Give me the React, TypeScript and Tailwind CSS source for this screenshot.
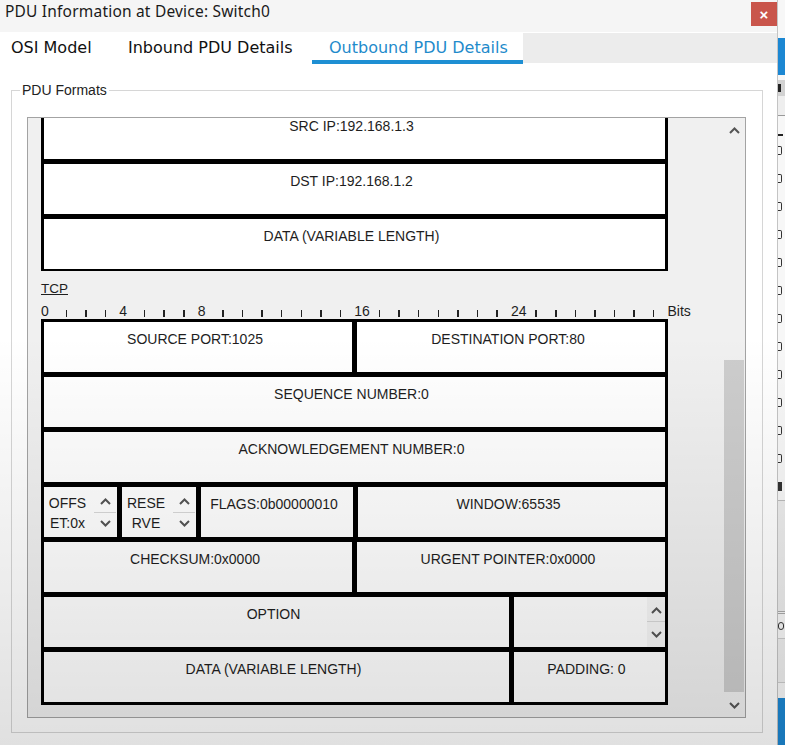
import { clsx } from 'clsx'

const sans = "font-['Liberation_Sans',Arial,sans-serif]"

const bitLabels: Record<number, string> = { 0: '0', 4: '4', 8: '8', 16: '16', 24: '24' }

function Chevron({ up }: { up?: boolean }) {
  return (
    <svg width="11" height="7" viewBox="0 0 11 7">
      <polyline
        points={up ? '1,6 5.5,1.5 10,6' : '1,1 5.5,5.5 10,1'}
        fill="none"
        stroke="#555"
        strokeWidth="2"
      />
    </svg>
  )
}

function Spinner({ className }: { className?: string }) {
  return (
    <div className={clsx('flex flex-col w-[22px] shrink-0', className)}>
      <div className="h-[25px] flex items-center justify-center pt-[4px]">
        <Chevron up />
      </div>
      <div className="h-px bg-[#d8d8d8]" />
      <div className="h-[24px] flex items-center justify-center pb-[4px]">
        <Chevron />
      </div>
    </div>
  )
}

function Cell({ className, children }: { className?: string; children?: React.ReactNode }) {
  return (
    <div
      className={clsx(
        'h-[50px] bg-white text-center pt-[9px] pr-[6px] leading-[16px] text-[14px] text-[#1e1e1e] whitespace-nowrap overflow-hidden',
        className
      )}
    >
      {children}
    </div>
  )
}

function SpinCell({ lines, className }: { lines: string[]; className?: string }) {
  return (
    <div className={clsx('h-[50px] bg-white flex', className)}>
      <div className="flex-1 text-center pt-[6px] pr-[3px] leading-[20px] text-[14px] text-[#1e1e1e]">
        {lines.map((l) => (
          <div key={l}>{l}</div>
        ))}
      </div>
      <Spinner className="mr-px" />
    </div>
  )
}

// sliver of the window behind the dialog
function BackWindow() {
  const marks = [164, 190, 217, 245, 273, 302, 330, 357, 385, 414, 442, 470]
  return (
    <div className="w-[8px] h-full shrink-0 overflow-hidden flex flex-col bg-[#f7f7f7] border-l border-[#c4c4c4]">
      <div className="h-[38px] shrink-0" />
      <div className="h-[37px] shrink-0 bg-[#1c87d2]" />
      <div className="h-[5px] shrink-0" />
      <div className="h-[16px] shrink-0 bg-[#d2d2d2] pt-[4px]">
        <div className="w-[3px] h-[8px] bg-[#222]" />
      </div>
      <div className="h-[20px] shrink-0 bg-[#eeeeee] border-b border-[#999]" />
      <div className="h-[18px] shrink-0" />
      <div className="h-[10px] shrink-0 flex">
        <div className="w-[5px] h-[2px] bg-[#222]" />
      </div>
      {marks.map((y) => (
        <div key={y} className="h-[28px] shrink-0 pt-[2px]">
          <div className="w-[4px] h-[9px] border-r-[1.5px] border-y-[1.5px] border-[#333] rounded-r-[2px]" />
        </div>
      ))}
      <div className="h-[18px] shrink-0 pt-[2px]">
        <div className="w-[4px] h-[9px] bg-[#333]" />
      </div>
      <div className="h-px shrink-0 bg-[#bbb] mt-[2px]" />
      <div className="h-[110px] shrink-0 bg-[#ececec]" />
      <div className="h-[3px] shrink-0 border-y border-[#aaa]" />
      <div className="h-[24px] shrink-0 pt-[8px]">
        <div className="w-[6px] h-[8px] border-[1.5px] border-[#333] rounded-full" />
      </div>
      <div className="h-[45px] shrink-0 border-y border-[#ccc] bg-[#eeeeee]" />
      <div className="h-[15px] shrink-0" />
      <div className="flex-1 bg-[#1c87d2]" />
    </div>
  )
}

export default function App() {
  return (
    <div className={clsx('w-[785px] h-[745px] relative overflow-hidden flex bg-white', sans)}>
      <div className="w-[777px] h-full shrink-0 flex flex-col bg-white">
        {/* title bar */}
        <div className="h-[32px] shrink-0 flex items-start justify-between bg-[#f5f5f5]">
          <span className="pl-[5px] pt-[1px] text-[15.5px] tracking-[0.2px] leading-[21px] text-[#1a1a1a] font-['Noto_Sans',sans-serif]">
            PDU Information at Device: Switch0
          </span>
          <button className="mt-[2px] w-[26px] h-[24px] bg-[#c9554b] text-white flex items-center justify-center text-[15px] font-bold leading-none">
            ×
          </button>
        </div>

        {/* tabs */}
        <div className="h-[32px] shrink-0 flex font-['DejaVu_Sans',sans-serif] text-[16px] leading-[18px] whitespace-nowrap">
          <div className="w-[112px] h-full pl-[11px] pt-[7px] text-[#111]">OSI Model</div>
          <div className="w-[200px] h-full pl-[16px] pt-[7px] text-[#111]">Inbound PDU Details</div>
          <div className="w-[211px] h-full pl-[17px] pt-[7px] text-[#1f8bcb] border-b-[4px] border-[#1e8fd3]">
            Outbound PDU Details
          </div>
          <div className="flex-1 mt-px h-[30px] bg-[#ececec]" />
        </div>

        {/* group box */}
        <fieldset className="ml-[11px] mt-[18px] w-[752px] border border-[#d6d6d6] p-0">
          <legend className="ml-[8px] px-[2px] text-[14px] leading-[16px] text-[#222]">PDU Formats</legend>

          <div className="ml-[15px] mr-[16px] mt-[19px] mb-[14px] h-[601px] border border-[#a3a3a3] bg-[#f0f0f0] flex">
            {/* canvas */}
            <div className="flex-1 overflow-hidden pl-[13px] text-[#1e1e1e]">
              {/* IP header (scrolled) */}
              <div className="-mt-[9px] w-[627px] bg-black px-[3px] pb-[2px] flex flex-col gap-[5px]">
                <Cell>SRC IP:192.168.1.3</Cell>
                <Cell>DST IP:192.168.1.2</Cell>
                <Cell>DATA (VARIABLE LENGTH)</Cell>
              </div>

              <div className="mt-[10px] text-[13.5px] leading-[16px] underline">TCP</div>

              <div className="mt-px flex h-[21px] items-end text-[14px]">
                {Array.from({ length: 32 }, (_, i) => (
                  <div key={i} className="w-[19.59px] shrink-0 h-full flex items-end">
                    {bitLabels[i] ? (
                      <span className="leading-[16px]">{bitLabels[i]}</span>
                    ) : (
                      <span className="ml-[5px] mb-[2px] w-[1.5px] h-[7px] bg-[#222]" />
                    )}
                  </div>
                ))}
                <span className="leading-[16px]">Bits</span>
              </div>

              {/* TCP header */}
              <div className="w-[627px] bg-black p-[3px] flex flex-col gap-[5px]">
                <div className="flex gap-[5px]">
                  <Cell className="w-[308px]">SOURCE PORT:1025</Cell>
                  <Cell className="flex-1">DESTINATION PORT:80</Cell>
                </div>
                <Cell>SEQUENCE NUMBER:0</Cell>
                <Cell>ACKNOWLEDGEMENT NUMBER:0</Cell>
                <div className="flex gap-[5px]">
                  <SpinCell className="w-[73px]" lines={['OFFS', 'ET:0x']} />
                  <SpinCell className="w-[74px]" lines={['RESE', 'RVE']} />
                  <Cell className="w-[152px] pr-0">FLAGS:0b00000010</Cell>
                  <Cell className="flex-1">WINDOW:65535</Cell>
                </div>
                <div className="flex gap-[5px]">
                  <Cell className="w-[308px]">CHECKSUM:0x0000</Cell>
                  <Cell className="flex-1">URGENT POINTER:0x0000</Cell>
                </div>
                <div className="flex gap-[5px]">
                  <Cell className="w-[465px]">OPTION</Cell>
                  <div className="flex-1 h-[50px] bg-white flex justify-end">
                    <div className="flex flex-col w-[18px] pt-[1px] bg-[#f6f6f6]">
                      <div className="h-[23px] flex items-center justify-center pt-[2px]">
                        <Chevron up />
                      </div>
                      <div className="h-px bg-[#d8d8d8]" />
                      <div className="h-[24px] flex items-center justify-center">
                        <Chevron />
                      </div>
                    </div>
                  </div>
                </div>
                <div className="flex gap-[5px]">
                  <Cell className="w-[465px]">DATA (VARIABLE LENGTH)</Cell>
                  <Cell className="flex-1">PADDING: 0</Cell>
                </div>
              </div>
            </div>

            {/* scrollbar */}
            <div className="w-[22px] shrink-0 flex flex-col bg-[#f0f0f0]">
              <div className="h-[24px] shrink-0 flex items-center justify-center">
                <Chevron up />
              </div>
              <div className="flex-1 flex flex-col pt-[218px] pb-[1px] px-px">
                <div className="flex-1 bg-[#cdcdcd]" />
              </div>
              <div className="h-[24px] shrink-0 flex items-center justify-center">
                <Chevron />
              </div>
            </div>
          </div>
        </fieldset>
      </div>

      <BackWindow />

      {/* screen-capture shading */}
      <div className="absolute inset-0 pointer-events-none bg-[linear-gradient(to_bottom,rgba(0,0,0,0)_45%,rgba(0,0,0,0.12))]" />
    </div>
  )
}
